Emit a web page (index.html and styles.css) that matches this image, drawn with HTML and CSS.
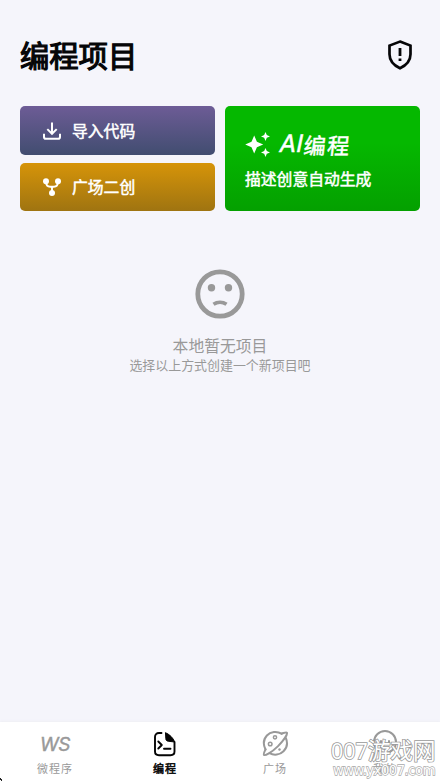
FILE: index.html
```html
<!DOCTYPE html>
<html lang="zh-CN">
<head>
<meta charset="utf-8">
<title>编程项目</title>
<link rel="stylesheet" href="styles.css">
</head>
<body>
<div class="app">
  <header class="header">
    <h1>编程项目</h1>
    <svg class="shield" viewBox="0 0 24 30" fill="none" stroke="#050507">
      <path d="M12 1.600 22.500 5.600v8.700c0 6.400-4.200 11-10.500 14-6.300-3-10.500-7.600-10.500-14V5.600z" stroke-width="2.700"/>
      <path d="M12 8v8M12 18.500v2.600" stroke-width="2.800"/>
    </svg>
  </header>
  <main class="main">
    <section class="actions">
      <div class="stack">
        <button class="card import">
          <svg class="card-icon" viewBox="0 0 18 18" fill="none" stroke="#fff" stroke-width="2">
            <path d="M9 .5v11M4.300 7.100 9 11.800l4.700-4.700M1 11.700v3.200c0 1 .8 1.800 1.800 1.800h12.400c1 0 1.800-.8 1.800-1.800v-3.200"/>
          </svg>
          <span>导入代码</span>
        </button>
        <button class="card fork">
          <svg class="card-icon" viewBox="0 0 18 18" fill="#fff">
            <circle cx="3" cy="3.300" r="3"/><circle cx="15" cy="3.300" r="3"/><circle cx="9" cy="15" r="3"/>
            <path d="M3 3.500c0 3.500 1.500 5.300 4.200 5.300h3.600c2.700 0 4.200-1.800 4.200-5.300M9 9v6" fill="none" stroke="#fff" stroke-width="1.900"/>
          </svg>
          <span>广场二创</span>
        </button>
      </div>
      <button class="card ai">
        <span class="ai-title">
          <svg class="spark" viewBox="0 0 25 25" fill="#fff">
            <path d="M9.200 3.500 11.900 9.800 18.200 12.500 11.900 15.200 9.200 21.500 6.500 15.200.2 12.500 6.500 9.800zM20.500 0l1.300 3.100L25 4.500l-3.200 1.300L20.500 9l-1.300-3.200L16 4.500l3.200-1.400zM20.500 16l1.300 3.100 3.200 1.400-3.200 1.300-1.300 3.200-1.300-3.200-3.200-1.300 3.200-1.400z"/>
          </svg>
          <span class="ai-name"><span class="latin">AI</span>编程</span>
        </span>
        <span class="ai-sub">描述创意自动生成</span>
      </button>
    </section>
    <section class="empty">
      <svg class="sad" viewBox="0 0 50 50">
        <circle cx="25" cy="25" r="22.200" fill="none" stroke="#999" stroke-width="4.800"/>
        <circle cx="16.500" cy="18.800" r="3.700" fill="#999"/><circle cx="33.500" cy="18.800" r="3.700" fill="#999"/>
        <path d="M18.500 35.300c3.800-2.600 9.200-2.600 13 0" fill="none" stroke="#999" stroke-width="3.600"/>
      </svg>
      <p class="empty-title">本地暂无项目</p>
      <p class="empty-text">选择以上方式创建一个新项目吧</p>
    </section>
  </main>
  <nav class="tabs">
    <div class="tab">
      <span class="tab-icon ws">WS</span>
      <span>微程序</span>
    </div>
    <div class="tab active">
      <svg class="tab-icon" viewBox="0 0 28 28" fill="none" stroke="#050505" stroke-width="1.900" stroke-linecap="round" stroke-linejoin="round">
        <path d="M10.500 3H8C5.500 3 4 4.500 4 7v14.500C4 24 5.500 25.200 8 25.200h11.500c2.500 0 4-1.200 4-3.700V12M7.300 11.500l3.500 3.500-3.500 3.500M13 18.700h6.500"/>
        <path d="M14.800 2.800c3.800 1.700 7.500 5.200 8.900 9.200l-6.500-.8c-1.600-.2-2.400-1-2.400-2.500z" fill="#050505" stroke-width="1"/>
      </svg>
      <span>编程</span>
    </div>
    <div class="tab">
      <svg class="tab-icon" viewBox="0 0 28 28" fill="none" stroke="#999" stroke-width="2" stroke-linecap="round" stroke-linejoin="round">
        <path d="M20.500 3.700C16 .8 9.500 1.500 5.900 5.500 2.500 9.200 2.200 14.800 4.500 19.500M24.800 8c2 4.500 1.200 9.700-2.300 13.200-3.700 3.800-9.500 4.400-14 2"/>
        <path d="M20.500 3.700C23 3 25.200 1.900 25.900 2.600c.8 1.500-3 7.500-9.100 13.800C10.500 22.600 4 25.800 3 25c-.8-.7.2-2.900 1.500-5.500"/>
        <circle cx="14" cy="7.300" r="1.600" stroke-width="1.500"/><circle cx="9.200" cy="14" r="1.800" stroke-width="1.500"/><circle cx="18.500" cy="19.500" r="1.200" fill="#999" stroke="none"/>
      </svg>
      <span>广场</span>
    </div>
    <div class="tab">
      <svg class="tab-icon" viewBox="0 0 28 28" fill="none" stroke="#999" stroke-width="2" stroke-linecap="round">
        <circle cx="14" cy="12" r="11"/><path d="M18 11v2.500M10 11v2.500M10 17.500c2.300 1.700 5.700 1.700 8 0"/>
      </svg>
      <span>我的</span>
    </div>
  </nav>
  <div class="watermark">
    <span class="mark-name"><span class="digits">007</span>游戏网</span>
    <span class="mark-url">www.yx007.com</span>
  </div>
  <svg class="corner" viewBox="0 0 3 4"><path d="M0 0h1v1h1v2H1V2H0z" fill="#222"/></svg>
</div>
</body>
</html>
```
FILE: styles.css
```css
* { box-sizing: border-box; }
body {
  margin: 0;
  background: #f5f5fb;
  font-family: "Noto Sans CJK SC", sans-serif;
}
.app {
  position: relative;
  display: flex;
  flex-direction: column;
  width: 440px;
  height: 782px;
  overflow: hidden;
}
h1, p { margin: 0; }
.header {
  display: flex;
  align-items: center;
  justify-content: space-between;
  height: 106px;
  padding: 3px 28px 0 20px;
}
h1 {
  margin-top: -2px;
  font-size: 29.3px;
  line-height: 40px;
  font-weight: 400;
  color: #050507;
  -webkit-text-stroke: 1.2px #050507;
}
.shield { width: 24px; height: 30px; }
.main { flex: 1; }
.actions {
  display: grid;
  grid-template-columns: 1fr 1fr;
  gap: 10px;
  height: 105px;
  padding: 0 20px;
}
.stack { display: grid; grid-template-rows: 1fr 1fr; gap: 8px; }
.card {
  display: flex;
  border: 0;
  border-radius: 5px;
  color: #fff;
  font: 400 15.8px/24px "Noto Sans CJK SC", sans-serif;
  -webkit-text-stroke: 0.5px #fff;
}
.import, .fork { align-items: center; gap: 11px; padding: 1px 23px 0; }
.import { background: linear-gradient(#6d5c96, #414d70); }
.fork { background: linear-gradient(#d69409, #9f7411); }
.card-icon { width: 18px; height: 18px; }
.ai {
  flex-direction: column;
  align-items: flex-start;
  padding: 22px 20px 0;
  background: linear-gradient(#05b800 35%, #04a000);
}
.ai-title { display: flex; align-items: center; gap: 10px; height: 32px; }
.spark { width: 25px; height: 25px; }
.ai-name {
  display: flex;
  align-items: center;
  margin-top: -1px;
  font-size: 22px;
  line-height: 30px;
  letter-spacing: 1.5px;
  height: 30px;
  transform: skewX(-6deg);
}
.latin {
  font-family: Inter, sans-serif;
  font-size: 24px;
  font-weight: 400;
  letter-spacing: 0;
  margin-right: 1px;
  transform: skewX(-6deg);
}
.ai-sub { margin-top: 7px; }
.empty {
  display: flex;
  flex-direction: column;
  align-items: center;
  padding-top: 58px;
  color: #999;
}
.sad { width: 50px; height: 50px; }
.empty-title { margin-top: 15px; font-size: 15.8px; line-height: 24px; }
.empty-text { margin-top: -2px; font-size: 12.95px; line-height: 18px; }
.tabs {
  display: grid;
  grid-template-columns: repeat(4, 1fr);
  height: 60px;
  padding-top: 8px;
  background: #fff;
  box-shadow: 0 0 3px #e9e9ef;
}
.tab {
  display: flex;
  flex-direction: column;
  align-items: center;
  color: #999;
  font-size: 11px;
  line-height: 16px;
  letter-spacing: 1px;
}
.active { color: #050505; -webkit-text-stroke: 0.5px #050505; }
.tab-icon { width: 28px; height: 28px; margin-bottom: 2px; }
.ws {
  display: flex;
  justify-content: center;
  align-items: center;
  font: italic 400 19px/30px Inter, sans-serif;
  padding-top: 2px;
  letter-spacing: -0.5px;
  -webkit-text-stroke: 0.4px #999;
}
.watermark {
  position: absolute;
  left: 331px;
  top: 736px;
  display: flex;
  flex-direction: column;
  color: #fff;
  white-space: nowrap;
  -webkit-text-stroke: 1.6px #999;
  paint-order: stroke fill;
}
.mark-name { font-size: 22.5px; line-height: 26px; }
.digits { font-family: "Open Sans", sans-serif; font-size: 21.5px; }
.mark-url {
  margin: -2px 0 0 2px;
  font: 13.2px/18px "DejaVu Sans", sans-serif;
  letter-spacing: -0.5px;
  -webkit-text-stroke: 1.3px #aaa;
}
.corner { position: absolute; left: 0; bottom: 0; width: 3px; height: 4px; }
```
